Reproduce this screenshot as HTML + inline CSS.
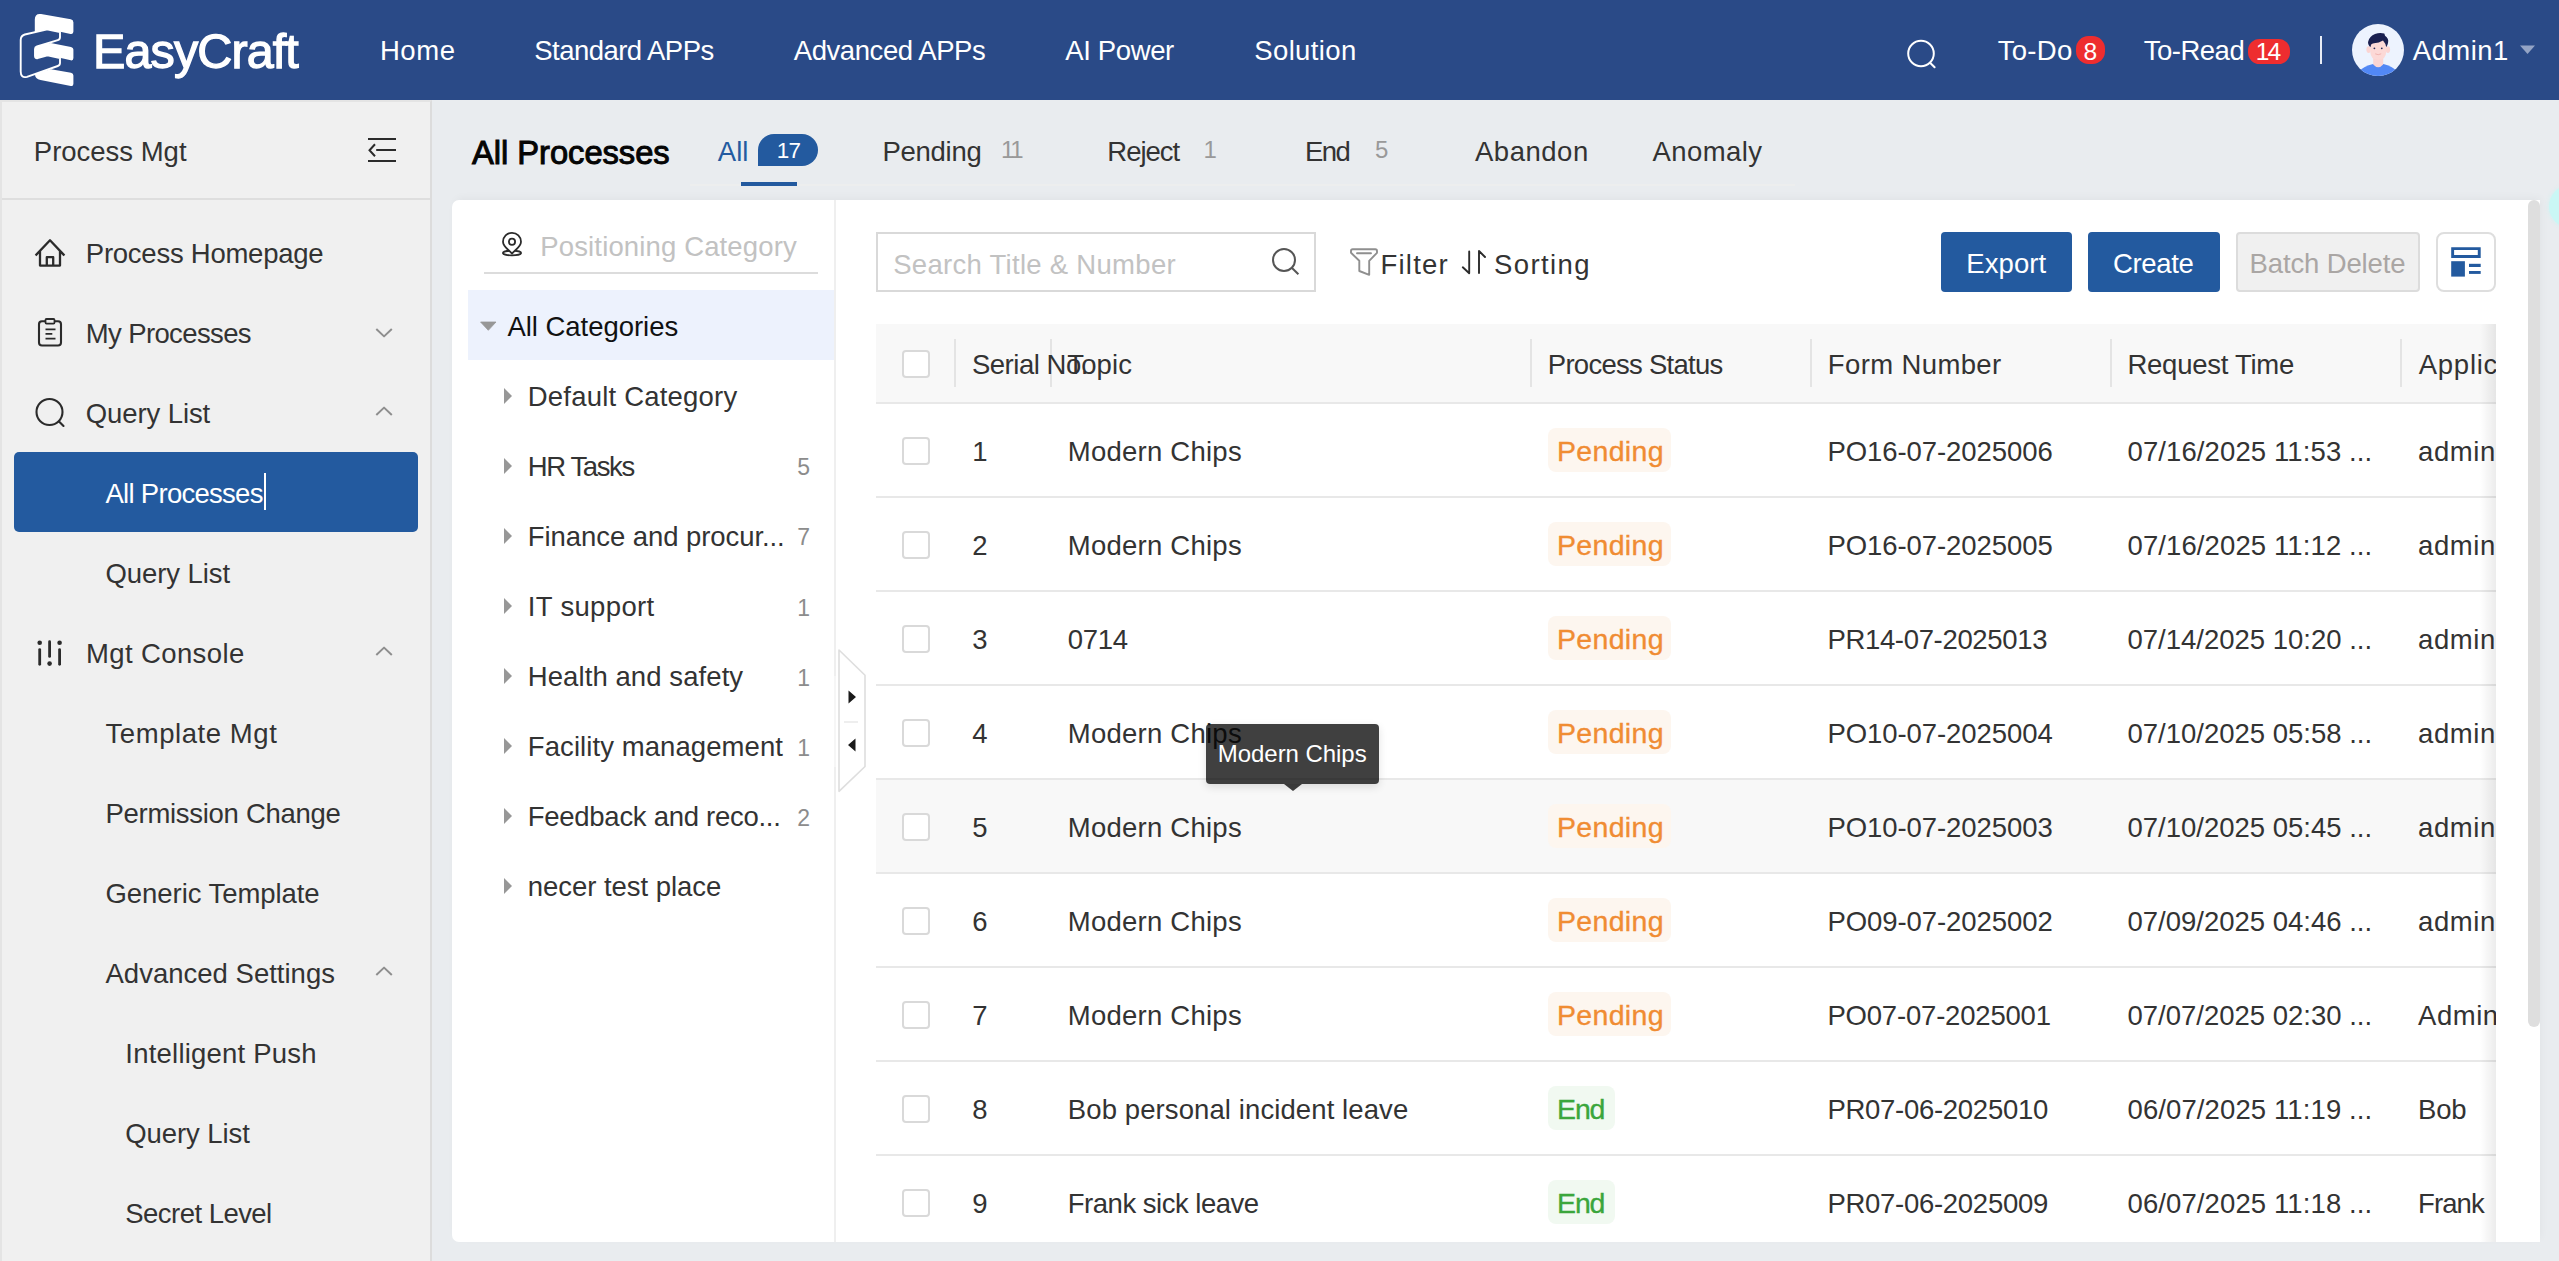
<!DOCTYPE html>
<html>
<head>
<meta charset="utf-8">
<title>All Processes</title>
<style>
*{box-sizing:border-box;margin:0;padding:0}
html,body{width:2559px;height:1261px;overflow:hidden}
body{font-family:"Liberation Sans",sans-serif;font-size:27.5px;color:#333;background:#e9ecef;position:relative}
.abs{position:absolute}
.t{position:absolute;white-space:nowrap;line-height:40px;height:40px}
#hdr{position:absolute;left:0;top:0;width:2559px;height:100px;background:#2a4a87;color:#fff}
#hdr .t{color:#fff}
.badge{position:absolute;background:#ee2d2f;border-radius:14px;height:29px}
#side{position:absolute;left:0;top:100px;width:432px;height:1161px;background:#f0f0f0;border-left:2px solid #e4e4e4;border-right:2px solid #dcdcdc;border-top:2px solid #e4e4e4}
#side .t{margin-left:-2px;margin-top:-102px}
#side svg{margin-left:-2px;margin-top:-102px}
.sep{position:absolute;left:0;width:428px;top:96px;height:2px;background:#dedede}
.act{position:absolute;left:12px;top:350px;width:404px;height:80px;background:#235a9f;border-radius:5px}
#card{position:absolute;left:452px;top:200px;width:2088px;height:1042px;background:#fff;border-radius:7px 0 0 7px;box-shadow:2px -3px 8px -1px rgba(0,0,0,0.04)}
.ic{position:absolute;fill:none;stroke-linecap:round;stroke-linejoin:round}
.cb{position:absolute;left:902px;width:28px;height:28px;border:2px solid #d9d9d9;border-radius:4px;background:#fff}
.hl{position:absolute;left:876px;width:1620px;height:2px;background:#e8e8e8}
.tag{position:absolute;left:1548px;height:44px;border-radius:8px}
.btn{position:absolute;top:232px;height:60px;border-radius:4px;background:#235a9f}
.car{position:absolute;left:504px;width:0;height:0;border-left:8.7px solid #979797;border-top:8px solid transparent;border-bottom:8px solid transparent}
</style>
</head>
<body>
<div id="hdr">
<svg class="abs" style="left:18px;top:12px" width="60" height="78" viewBox="18 12 60 78">
<g fill="#fff">
<path d="M34.800 19.500 Q34.800 13.200 41 14 L70.800 19.300 Q73.400 19.800 73.400 22.300 L73.400 31.600 Q73.400 34.600 70.500 33.900 L58 31.300 L34.800 34 Z"/>
<path d="M35 48.300 Q35 46.500 36.800 45.900 L50.700 43 L71 46.900 Q73.400 47.400 73.400 49.600 L73.400 58 Q73.400 60.900 70.800 60.300 L48.600 55.300 L38.200 58.800 Q35 59.600 35 56.800 Z"/>
<path d="M35 73.500 L51 69.300 L71 72.800 Q73.400 73.300 73.400 75.600 L73.400 83.800 Q73.400 86.600 70.800 86 L40.500 80 Q35 78.800 35 74.500 Z"/>
</g>
<path d="M20.700 40 Q20.700 35.800 24.800 34.500 L46.300 29.600 Q47.200 29.400 48.100 29.600 L60 32 L60 37.200 Q60 39.400 57.800 40.100 L37 46.500 Q35 47.200 35 49 L35 56 Q35 58.500 37.500 58.200 L47.500 55.400 L60 58 L60 63 Q60 65.300 57.800 66 L27 76.800 Q20.700 78.500 20.700 71.500 Z" fill="#2a4a87" stroke="#fff" stroke-width="1.9" stroke-linejoin="round"/>
</svg>
<div class="t" style="left:93px;top:21.3px;font-size:48.5px;line-height:60px;height:60px;letter-spacing:-0.89px;-webkit-text-stroke:1.3px #fff">EasyCraft</div>
<div class="t" style="left:379.9px;top:31.4px;letter-spacing:0.61px">Home</div>
<div class="t" style="left:534.3px;top:31.4px;letter-spacing:-0.55px">Standard APPs</div>
<div class="t" style="left:793.8px;top:31.4px;letter-spacing:-0.44px">Advanced APPs</div>
<div class="t" style="left:1065.3px;top:31.4px;letter-spacing:-0.38px">AI Power</div>
<div class="t" style="left:1254.3px;top:31.4px;letter-spacing:0.36px">Solution</div>
<svg class="abs" style="left:1904.200px;top:35.700px" width="36" height="36" viewBox="0 0 36 36" fill="none" stroke="#fff" stroke-width="2" stroke-linecap="round"><circle cx="17" cy="17.500" r="12.800"/><path d="M26.300 27 L30.600 31.300"/></svg>
<div class="t" style="left:1997.8px;top:31.4px;letter-spacing:0.26px">To-Do</div>
<div class="badge" style="left:2076.250px;top:36px;width:28.900px;height:28.100px;border-radius:12.500px"></div>
<div class="t" style="left:2083.4px;top:31.9px;font-size:24.6px">8</div>
<div class="t" style="left:2143.8px;top:31.4px;letter-spacing:-0.51px">To-Read</div>
<div class="badge" style="left:2248px;top:39px;width:42px;height:25px;border-radius:11.500px"></div>
<div class="t" style="left:2255.8px;top:31.9px;font-size:24.6px;letter-spacing:-1.96px">14</div>
<div class="abs" style="left:2320px;top:36px;width:2px;height:28px;background:#e8ecf5"></div>
<svg class="abs" style="left:2352px;top:24px" width="52" height="52" viewBox="0 0 52 52">
<defs><clipPath id="avc"><circle cx="26" cy="26" r="26"/></clipPath></defs>
<circle cx="26" cy="26" r="26" fill="#edf3fe"/>
<g clip-path="url(#avc)">
<path d="M6 48 Q12 42 21 40 L31.5 40 Q40 42 46 48 L46 54 L6 54 Z" fill="#5288f5"/>
<path d="M21.2 33 L31.2 33 L31.2 40.5 Q26.2 46 21.2 40.5 Z" fill="#fbd5d3"/>
<ellipse cx="16.6" cy="25.6" rx="2.2" ry="3.4" fill="#fbd5d3"/><ellipse cx="35.9" cy="25.6" rx="2.2" ry="3.4" fill="#fbd5d3"/>
<path d="M18.300 15 L34.200 15 L34.200 28 Q34 35.800 26.200 35.800 Q18.500 35.800 18.300 28 Z" fill="#fcd9d7"/>
<path d="M18.400 23.300 Q15.400 20 16.200 17.500 Q17.500 12 23 10 Q28 8.200 32.300 9.600 Q32.900 10.800 33 11.800 Q37.200 14.500 36 19 Q35.500 21.500 34.200 23.300 Q33.800 19.500 31 16.500 Q27 19 22 19.300 Q19.800 19.600 19.200 20.500 Z" fill="#1a2050"/>
<circle cx="22.4" cy="24.3" r="0.9" fill="#2a2d5a"/><circle cx="29.8" cy="24.3" r="0.9" fill="#2a2d5a"/>
<path d="M23.2 29.8 Q26.2 31.6 29.2 29.8" stroke="#e79a98" stroke-width="0.6" fill="none"/>
</g></svg>
<div class="t" style="left:2412.8px;top:31.4px;letter-spacing:0.43px">Admin1</div>
<svg class="abs" style="left:2520px;top:45px" width="16" height="10" viewBox="0 0 16 10"><path d="M0 0.5 L15 0.5 L7.5 9 Z" fill="#94a4c5"/></svg>
</div>
<div id="side">
<div class="sep"></div>
<div class="act"></div>
<div class="t" style="left:33.8px;top:131.9px;letter-spacing:-0.01px">Process Mgt</div>
<svg class="ic" style="left:366px;top:134px" width="34" height="32" viewBox="366 134 34 32" stroke="#2b2b2b" stroke-width="2"><path d="M368 139 H396 M376.200 150 H396 M368 161 H396 M375 144.200 L369.500 150.200 L375 156.200" stroke-width="2" stroke-linecap="butt" stroke-linejoin="miter"/></svg>
<svg class="ic" style="left:32px;top:236px" width="36" height="34" viewBox="32 236 36 34" stroke="#2b2b2b" stroke-width="2"><path d="M36.400 254.600 L50 240.300 L63.600 254.600 M40 251.300 V265.600 H60 V251.300 M46.800 265.600 V257.200 H53.200 V265.600" stroke-width="2.3" stroke-linecap="square"/></svg>
<div class="t" style="left:85.8px;top:234px;letter-spacing:-0.25px">Process Homepage</div>
<svg class="ic" style="left:34px;top:316px" width="32" height="34" viewBox="34 316 32 34" stroke="#2b2b2b" stroke-width="2"><rect x="39" y="321.300" width="22" height="24.200" rx="3" stroke-width="2.1"/><rect x="45.500" y="319" width="9" height="4.600" rx="1" fill="#f0f0f0" stroke-width="1.8"/><path d="M45.500 329.300 H55.500 M45.500 333.900 H52.300 M45.500 338.700 H55.500" stroke-width="1.7" stroke-linecap="butt"/></svg>
<div class="t" style="left:85.8px;top:314px;letter-spacing:-0.63px">My Processes</div><svg class="abs" style="left:0;top:0" width="432" height="1261"><path d="M376.300 329.00 L384.050 336.40 L391.800 329.00" fill="none" stroke="#8e8e8e" stroke-width="2" stroke-linejoin="round"/></svg>
<svg class="ic" style="left:32px;top:395px" width="36" height="36" viewBox="32 395 36 36" stroke="#2b2b2b" stroke-width="2"><circle cx="49.5" cy="412" r="13" stroke-width="2.1"/><path d="M59 421.5 L63.5 426" stroke-width="2.1"/></svg>
<div class="t" style="left:85.8px;top:394px;letter-spacing:-0.1px">Query List</div><svg class="abs" style="left:0;top:0" width="432" height="1261"><path d="M376.300 415.05 L384.050 407.65 L391.800 415.05" fill="none" stroke="#8e8e8e" stroke-width="2" stroke-linejoin="round"/></svg>
<div class="t" style="left:105.5px;top:473.8px;color:#fff;letter-spacing:-0.72px">All Processes</div>
<div class="abs" style="left:262px;top:371px;width:2px;height:37px;background:#fff"></div>
<div class="t" style="left:105.5px;top:553.8px;letter-spacing:-0.07px">Query List</div>
<svg class="abs" style="left:34px;top:638px" width="32" height="32" viewBox="34 638 32 32" fill="#2b2b2b"><circle cx="39.700" cy="642.700" r="2.300"/><rect x="38.300" y="648.200" width="2.800" height="17.500" rx="1.400"/><rect x="48.200" y="640.300" width="2.800" height="17.500" rx="1.400"/><circle cx="49.600" cy="663.600" r="2.300"/><circle cx="59.600" cy="642.700" r="2.300"/><rect x="58.200" y="648.200" width="2.800" height="17.500" rx="1.400"/></svg>
<div class="t" style="left:86.1px;top:633.8px;letter-spacing:0.37px">Mgt Console</div><svg class="abs" style="left:0;top:0" width="432" height="1261"><path d="M376.300 655.05 L384.050 647.65 L391.800 655.05" fill="none" stroke="#8e8e8e" stroke-width="2" stroke-linejoin="round"/></svg>
<div class="t" style="left:105.5px;top:713.8px;letter-spacing:0.57px">Template Mgt</div>
<div class="t" style="left:105.5px;top:793.8px;letter-spacing:-0.29px">Permission Change</div>
<div class="t" style="left:105.5px;top:873.9px;letter-spacing:-0.06px">Generic Template</div>
<div class="t" style="left:105.5px;top:953.9px;letter-spacing:0.01px">Advanced Settings</div><svg class="abs" style="left:0;top:0" width="432" height="1261"><path d="M376.300 975.05 L384.050 967.65 L391.800 975.05" fill="none" stroke="#8e8e8e" stroke-width="2" stroke-linejoin="round"/></svg>
<div class="t" style="left:125.3px;top:1033.9px;letter-spacing:0.22px">Intelligent Push</div>
<div class="t" style="left:125.3px;top:1113.9px;letter-spacing:-0.08px">Query List</div>
<div class="t" style="left:125.3px;top:1193.9px;letter-spacing:-0.54px">Secret Level</div>
</div>
<div id="main">
<div class="t" style="left:472px;top:128.8px;font-size:32.7px;line-height:48px;height:48px;color:#050505;letter-spacing:-0.03px;-webkit-text-stroke:1px #050505">All Processes</div>
<div class="t" style="left:717.8px;top:131.7px;color:#245ba0;letter-spacing:0.02px">All</div>
<div class="abs" style="left:758px;top:134px;width:60px;height:32px;background:#235a9f;border-radius:16px 16px 16px 0"></div>
<div class="t" style="left:776.7px;top:130.8px;font-size:22.5px;color:#fff;letter-spacing:-0.63px">17</div>
<div class="abs" style="left:741px;top:182px;width:56px;height:4px;background:#235a9f"></div>
<div class="abs" style="left:690px;top:184px;width:1105px;height:2px;background:#edeeee"></div>
<div class="abs" style="left:741px;top:182px;width:56px;height:4px;background:#235a9f"></div>
<div class="t" style="left:882.5px;top:131.7px;letter-spacing:-0.29px">Pending</div><div class="t" style="left:1001px;top:129.8px;font-size:24px;color:#999;letter-spacing:-2.42px">11</div>
<div class="t" style="left:1107.3px;top:131.7px;letter-spacing:-1.01px">Reject</div><div class="t" style="left:1203.5px;top:129.8px;font-size:24px;color:#999">1</div>
<div class="t" style="left:1305.1px;top:131.7px;letter-spacing:-1.62px">End</div><div class="t" style="left:1375px;top:129.8px;font-size:24px;color:#999">5</div>
<div class="t" style="left:1475px;top:131.7px;letter-spacing:0.52px">Abandon</div>
<div class="t" style="left:1652.6px;top:131.7px;letter-spacing:0.4px">Anomaly</div>
</div>
<div class="abs" style="left:2549px;top:184.500px;width:43px;height:43px;border-radius:50%;background:#caf7f5;box-shadow:0 0 4px rgba(200,245,245,0.8)"></div>
<div id="card"></div>
<div id="cat">
<svg class="ic" style="left:498px;top:228px" width="28" height="32" viewBox="498 228 28 32" stroke-width="1.8" stroke="#2b2b2b"><ellipse cx="512" cy="253" rx="9.100" ry="2.300"/><path d="M512 253.600 C508.500 249.600 503 246.800 503 241.800 A9 9 0 0 1 521 241.800 C521 246.800 515.500 249.600 512 253.600 Z" fill="#fff"/><circle cx="512" cy="241.800" r="3.100"/></svg>
<div class="t" style="left:540.3px;top:227.3px;color:#c2c2c2;letter-spacing:0.14px">Positioning Category</div>
<div class="abs" style="left:484px;top:272px;width:334px;height:2px;background:#dcdcdc"></div>
<div class="abs" style="left:468px;top:290px;width:366px;height:70px;background:#edf2fd"></div>
<svg class="abs" style="left:480px;top:321px" width="17" height="10" viewBox="0 0 17 10"><path d="M0.6 1 H16 L8.3 9.3 Z" fill="#979797" stroke="#979797" stroke-width="0.8" stroke-linejoin="round"/></svg>
<div class="t" style="left:507.5px;top:306.7px;color:#111;letter-spacing:-0.04px">All Categories</div>
<div class="car" style="top:388px"></div>
<div class="t" style="left:527.8px;top:376.8px;letter-spacing:0.2px">Default Category</div>
<div class="car" style="top:458px"></div>
<div class="t" style="left:527.8px;top:446.8px;letter-spacing:-1.4px">HR Tasks</div>
<div class="t" style="left:797.3px;top:447.3px;font-size:23px;color:#8c8c8c">5</div>
<div class="car" style="top:528px"></div>
<div class="t" style="left:527.8px;top:516.8px;letter-spacing:-0.07px">Finance and procur...</div>
<div class="t" style="left:797.3px;top:517.3px;font-size:23px;color:#8c8c8c">7</div>
<div class="car" style="top:598.2px"></div>
<div class="t" style="left:527.8px;top:587px;letter-spacing:0.34px">IT support</div>
<div class="t" style="left:797.3px;top:587.5px;font-size:23px;color:#8c8c8c">1</div>
<div class="car" style="top:668.2px"></div>
<div class="t" style="left:527.8px;top:657px;letter-spacing:0.08px">Health and safety</div>
<div class="t" style="left:797.3px;top:657.5px;font-size:23px;color:#8c8c8c">1</div>
<div class="car" style="top:738.2px"></div>
<div class="t" style="left:527.8px;top:727px;letter-spacing:0.08px">Facility management</div>
<div class="t" style="left:797.3px;top:727.5px;font-size:23px;color:#8c8c8c">1</div>
<div class="car" style="top:808.2px"></div>
<div class="t" style="left:527.8px;top:797px;letter-spacing:-0.28px">Feedback and reco...</div>
<div class="t" style="left:797.3px;top:797.5px;font-size:23px;color:#8c8c8c">2</div>
<div class="car" style="top:878.2px"></div>
<div class="t" style="left:527.8px;top:867px;letter-spacing:-0.04px">necer test place</div>

<div class="abs" style="left:834px;top:200px;width:2px;height:1042px;background:#efefef"></div>
<svg class="abs" style="left:834px;top:646px" width="36" height="150" viewBox="834 646 36 150"><path d="M839 650 L865 675.300 L865 766.500 L839 791.300 Z" fill="#fff" stroke="#dedede" stroke-width="1.6" stroke-linejoin="round"/><path d="M835 676 V767" stroke="rgba(255,255,255,0.45)" stroke-width="2"/><path d="M844 722 H858" stroke="#e8e8e8" stroke-width="1.5"/><path d="M848.5 690.5 L856 697 L848.5 703.5 Z M855.5 738.5 L848 745 L855.5 751.5 Z" fill="#1a1a1a"/></svg>
</div>
<div id="tb">
<div class="abs" style="left:876px;top:232px;width:440px;height:60px;border:2px solid #d9d9d9;background:#fff"></div>
<div class="t" style="left:893.2px;top:244.5px;color:#c2c2c2;letter-spacing:0.29px">Search Title &amp; Number</div>
<svg class="ic" style="left:1268px;top:245px" width="36" height="36" viewBox="1268 245 36 36" stroke-width="2" stroke="#555"><circle cx="1284" cy="260" r="11"/><path d="M1292 268 L1298.400 274.300" stroke-linecap="butt"/></svg>
<svg class="ic" style="left:1346px;top:245px" width="36" height="36" viewBox="1346 245 36 36" stroke-width="1.9" stroke="#8f8f8f"><path d="M1352.700 249.200 H1375.300 Q1377 249.200 1377 250.900 V252.800 L1369.200 260.800 V274.800 L1359.300 271 V260.800 L1351 252.800 V250.900 Q1351 249.200 1352.700 249.200 Z M1357 253.300 H1371"/></svg>
<div class="t" style="left:1380.5px;top:244.5px;letter-spacing:1.23px">Filter</div>
<svg class="ic" style="left:1458px;top:246px" width="32" height="34" viewBox="1458 246 32 34" stroke-width="1.9" stroke="#2b2b2b"><path d="M1469.200 251.500 V273.200 L1462.800 267.300 M1479 273 V251 L1485 257"/></svg>
<div class="t" style="left:1494.1px;top:244.5px;letter-spacing:1.39px">Sorting</div>
<div class="btn" style="left:1941px;width:131px"></div>
<div class="t" style="left:1966.3px;top:243.8px;color:#fff;letter-spacing:0.08px">Export</div>
<div class="btn" style="left:2088px;width:132px"></div>
<div class="t" style="left:2113.1px;top:243.8px;color:#fff;letter-spacing:-0.37px">Create</div>
<div class="btn" style="left:2236px;width:184px;background:#f0f0f0;border:2px solid #dcdcdc"></div>
<div class="t" style="left:2249.6px;top:243.8px;color:#aaa6a4;letter-spacing:-0.14px">Batch Delete</div>
<div class="btn" style="left:2436px;width:60px;background:#fff;border:2px solid #dedede;border-radius:8px"></div>
<svg class="abs" style="left:2450px;top:246px" width="32" height="32" viewBox="2450 246 32 32" fill="#235a9f"><path d="M2451.200 247.300 H2480.700 V257.900 H2451.200 Z M2454.100 250.100 V255.100 H2477.800 V250.100 Z" fill-rule="evenodd"/><rect x="2451.200" y="261.200" width="13.700" height="15.400"/><rect x="2469" y="263.800" width="11.700" height="3.200"/><rect x="2469" y="271" width="11.700" height="2.900"/></svg>
<div class="abs" style="left:0;top:0;width:2496px;height:1242px;overflow:hidden">
<div class="abs" style="left:876px;top:324px;width:1620px;height:78px;background:#f8f8f8"></div>
<div class="hl" style="top:402px"></div>
<div class="abs" style="left:876px;top:780px;width:1620px;height:92px;background:#f8f8f8"></div>
<div class="cb" style="top:350px"></div>
<div class="abs" style="left:954px;top:339px;width:2px;height:48px;background:#e4e4e4"></div>
<div class="abs" style="left:1050px;top:339px;width:2px;height:48px;background:#e4e4e4"></div>
<div class="abs" style="left:1530px;top:339px;width:2px;height:48px;background:#e4e4e4"></div>
<div class="abs" style="left:1810px;top:339px;width:2px;height:48px;background:#e4e4e4"></div>
<div class="abs" style="left:2110px;top:339px;width:2px;height:48px;background:#e4e4e4"></div>
<div class="abs" style="left:2400px;top:339px;width:2px;height:48px;background:#e4e4e4"></div>
<div class="t" style="left:971.9px;top:344.5px;letter-spacing:-0.46px">Serial No.</div>
<div class="t" style="left:1067.3px;top:344.5px;letter-spacing:0.1px">Topic</div>
<div class="t" style="left:1547.8px;top:344.5px;letter-spacing:-0.73px">Process Status</div>
<div class="t" style="left:1827.8px;top:344.5px;letter-spacing:0.38px">Form Number</div>
<div class="t" style="left:2127.5px;top:344.5px;letter-spacing:-0.27px">Request Time</div>
<div class="t" style="left:2418.8px;top:344.5px;letter-spacing:0.72px">Applicant</div>
<div class="cb" style="top:437px"></div>
<div class="t" style="left:972.2px;top:431.5px">1</div>
<div class="t" style="left:1067.8px;top:431.5px;letter-spacing:0.24px">Modern Chips</div>
<div class="tag" style="top:428.2px;width:123px;background:#fdf6ef"></div><div class="t" style="left:1556.9px;top:431.2px;font-size:28.5px;color:#f08c33;letter-spacing:0.35px;-webkit-text-stroke:0.35px #f08c33">Pending</div>
<div class="t" style="left:1827.4px;top:431.5px;letter-spacing:-0.07px">PO16-07-2025006</div>
<div class="t" style="left:2127.5px;top:431.5px;letter-spacing:0.11px">07/16/2025 11:53 ...</div>
<div class="t" style="left:2418.1px;top:431.5px;letter-spacing:0.57px">admin</div>
<div class="hl" style="top:496px"></div>
<div class="cb" style="top:531px"></div>
<div class="t" style="left:972.2px;top:525.5px">2</div>
<div class="t" style="left:1067.8px;top:525.5px;letter-spacing:0.24px">Modern Chips</div>
<div class="tag" style="top:522.2px;width:123px;background:#fdf6ef"></div><div class="t" style="left:1556.9px;top:525.2px;font-size:28.5px;color:#f08c33;letter-spacing:0.35px;-webkit-text-stroke:0.35px #f08c33">Pending</div>
<div class="t" style="left:1827.4px;top:525.5px;letter-spacing:-0.07px">PO16-07-2025005</div>
<div class="t" style="left:2127.5px;top:525.5px;letter-spacing:0.11px">07/16/2025 11:12 ...</div>
<div class="t" style="left:2418.1px;top:525.5px;letter-spacing:0.57px">admin</div>
<div class="hl" style="top:590px"></div>
<div class="cb" style="top:625px"></div>
<div class="t" style="left:972.2px;top:619.5px">3</div>
<div class="t" style="left:1067.8px;top:619.5px;letter-spacing:-0.33px">0714</div>
<div class="tag" style="top:616.2px;width:123px;background:#fdf6ef"></div><div class="t" style="left:1556.9px;top:619.2px;font-size:28.5px;color:#f08c33;letter-spacing:0.35px;-webkit-text-stroke:0.35px #f08c33">Pending</div>
<div class="t" style="left:1827.4px;top:619.5px;letter-spacing:-0.33px">PR14-07-2025013</div>
<div class="t" style="left:2127.5px;top:619.5px">07/14/2025 10:20 ...</div>
<div class="t" style="left:2418.1px;top:619.5px;letter-spacing:0.57px">admin</div>
<div class="hl" style="top:684px"></div>
<div class="cb" style="top:719px"></div>
<div class="t" style="left:972.2px;top:713.5px">4</div>
<div class="t" style="left:1067.8px;top:713.5px;letter-spacing:0.24px">Modern Chips</div>
<div class="tag" style="top:710.2px;width:123px;background:#fdf6ef"></div><div class="t" style="left:1556.9px;top:713.2px;font-size:28.5px;color:#f08c33;letter-spacing:0.35px;-webkit-text-stroke:0.35px #f08c33">Pending</div>
<div class="t" style="left:1827.4px;top:713.5px;letter-spacing:-0.07px">PO10-07-2025004</div>
<div class="t" style="left:2127.5px;top:713.5px">07/10/2025 05:58 ...</div>
<div class="t" style="left:2418.1px;top:713.5px;letter-spacing:0.57px">admin</div>
<div class="hl" style="top:778px"></div>
<div class="cb" style="top:813px"></div>
<div class="t" style="left:972.2px;top:807.5px">5</div>
<div class="t" style="left:1067.8px;top:807.5px;letter-spacing:0.24px">Modern Chips</div>
<div class="tag" style="top:804.2px;width:123px;background:#fdf6ef"></div><div class="t" style="left:1556.9px;top:807.2px;font-size:28.5px;color:#f08c33;letter-spacing:0.35px;-webkit-text-stroke:0.35px #f08c33">Pending</div>
<div class="t" style="left:1827.4px;top:807.5px;letter-spacing:-0.07px">PO10-07-2025003</div>
<div class="t" style="left:2127.5px;top:807.5px">07/10/2025 05:45 ...</div>
<div class="t" style="left:2418.1px;top:807.5px;letter-spacing:0.57px">admin</div>
<div class="hl" style="top:872px"></div>
<div class="cb" style="top:907px"></div>
<div class="t" style="left:972.2px;top:901.5px">6</div>
<div class="t" style="left:1067.8px;top:901.5px;letter-spacing:0.24px">Modern Chips</div>
<div class="tag" style="top:898.2px;width:123px;background:#fdf6ef"></div><div class="t" style="left:1556.9px;top:901.2px;font-size:28.5px;color:#f08c33;letter-spacing:0.35px;-webkit-text-stroke:0.35px #f08c33">Pending</div>
<div class="t" style="left:1827.4px;top:901.5px;letter-spacing:-0.07px">PO09-07-2025002</div>
<div class="t" style="left:2127.5px;top:901.5px">07/09/2025 04:46 ...</div>
<div class="t" style="left:2418.1px;top:901.5px;letter-spacing:0.57px">admin</div>
<div class="hl" style="top:966px"></div>
<div class="cb" style="top:1001px"></div>
<div class="t" style="left:972.2px;top:995.5px">7</div>
<div class="t" style="left:1067.8px;top:995.5px;letter-spacing:0.24px">Modern Chips</div>
<div class="tag" style="top:992.2px;width:123px;background:#fdf6ef"></div><div class="t" style="left:1556.9px;top:995.2px;font-size:28.5px;color:#f08c33;letter-spacing:0.35px;-webkit-text-stroke:0.35px #f08c33">Pending</div>
<div class="t" style="left:1827.4px;top:995.5px;letter-spacing:-0.19px">PO07-07-2025001</div>
<div class="t" style="left:2127.5px;top:995.5px">07/07/2025 02:30 ...</div>
<div class="t" style="left:2418.1px;top:995.5px;letter-spacing:0.53px">Admin1</div>
<div class="hl" style="top:1060px"></div>
<div class="cb" style="top:1095px"></div>
<div class="t" style="left:972.2px;top:1089.5px">8</div>
<div class="t" style="left:1067.8px;top:1089.5px;letter-spacing:0.1px">Bob personal incident leave</div>
<div class="tag" style="top:1086.2px;width:67px;background:#f1f9f1"></div><div class="t" style="left:1557.1px;top:1089.2px;font-size:28.5px;color:#3ba63c;letter-spacing:-1.21px;-webkit-text-stroke:0.35px #3ba63c">End</div>
<div class="t" style="left:1827.4px;top:1089.5px;letter-spacing:-0.28px">PR07-06-2025010</div>
<div class="t" style="left:2127.5px;top:1089.5px;letter-spacing:0.11px">06/07/2025 11:19 ...</div>
<div class="t" style="left:2418.1px;top:1089.5px;letter-spacing:-0.22px">Bob</div>
<div class="hl" style="top:1154px"></div>
<div class="cb" style="top:1189px"></div>
<div class="t" style="left:972.2px;top:1183.5px">9</div>
<div class="t" style="left:1067.8px;top:1183.5px;letter-spacing:-0.49px">Frank sick leave</div>
<div class="tag" style="top:1180.2px;width:67px;background:#f1f9f1"></div><div class="t" style="left:1557.1px;top:1183.2px;font-size:28.5px;color:#3ba63c;letter-spacing:-1.21px;-webkit-text-stroke:0.35px #3ba63c">End</div>
<div class="t" style="left:1827.4px;top:1183.5px;letter-spacing:-0.28px">PR07-06-2025009</div>
<div class="t" style="left:2127.5px;top:1183.5px;letter-spacing:0.11px">06/07/2025 11:18 ...</div>
<div class="t" style="left:2418.1px;top:1183.5px;letter-spacing:-0.92px">Frank</div>
<div class="hl" style="top:1248px"></div>

<div class="abs" style="left:2480px;top:324px;width:16px;height:918px;background:linear-gradient(to right,rgba(0,0,0,0),rgba(0,0,0,0.075))"></div>
</div>
<div class="abs" style="left:1206px;top:724px;width:173px;height:60px;background:rgba(0,0,0,0.75);border-radius:4px;box-shadow:0 3px 8px rgba(0,0,0,0.12)"></div>
<div class="abs" style="left:1284px;top:784px;width:0;height:0;border-left:9px solid transparent;border-right:9px solid transparent;border-top:7px solid rgba(0,0,0,0.75)"></div>
<div class="t" style="left:1217.8px;top:734px;font-size:24px;color:#fff;letter-spacing:-0.05px">Modern Chips</div>
<div class="abs" style="left:2528px;top:200px;width:12px;height:827px;background:#dedede;border-radius:6px"></div>
</div>
</body>
</html>
